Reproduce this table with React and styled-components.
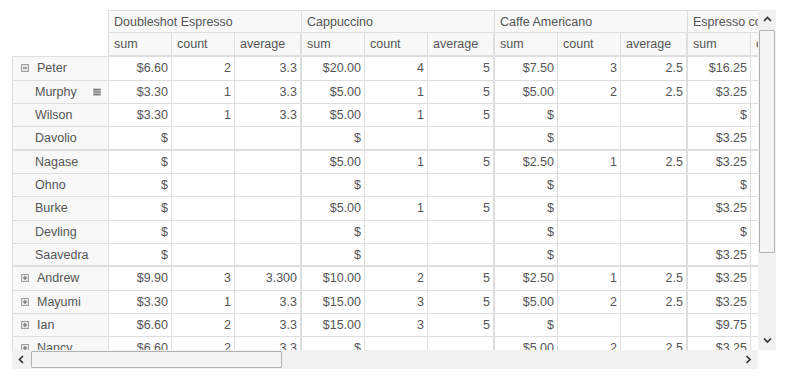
import React from "react";
import styled, { createGlobalStyle } from "styled-components";

const GlobalStyle = createGlobalStyle`
  body {
    margin: 0;
    background: #fff;
    font-family: "Liberation Sans", Arial, sans-serif;
  }
`;

const LINE = "#dedede";

const groups = ["Doubleshot Espresso", "Cappuccino", "Caffe Americano", "Espresso con Panna"];
const measures = ["sum", "count", "average"];

const E = ["$", "", ""];
const rows = [
  { name: "Peter", kind: "open", cells: [["$6.60", "2", "3.3"], ["$20.00", "4", "5"], ["$7.50", "3", "2.5"], ["$16.25", "5", "3.25"]] },
  { name: "Murphy", kind: "child", menu: true, cells: [["$3.30", "1", "3.3"], ["$5.00", "1", "5"], ["$5.00", "2", "2.5"], ["$3.25", "1", "3.25"]] },
  { name: "Wilson", kind: "child", cells: [["$3.30", "1", "3.3"], ["$5.00", "1", "5"], E, E] },
  { name: "Davolio", kind: "child", sep: true, cells: [E, E, E, ["$3.25", "1", "3.25"]] },
  { name: "Nagase", kind: "child", cells: [E, ["$5.00", "1", "5"], ["$2.50", "1", "2.5"], ["$3.25", "1", "3.25"]] },
  { name: "Ohno", kind: "child", cells: [E, E, E, E] },
  { name: "Burke", kind: "child", cells: [E, ["$5.00", "1", "5"], E, ["$3.25", "1", "3.25"]] },
  { name: "Devling", kind: "child", cells: [E, E, E, E] },
  { name: "Saavedra", kind: "child", sep: true, cells: [E, E, E, ["$3.25", "1", "3.25"]] },
  { name: "Andrew", kind: "closed", cells: [["$9.90", "3", "3.300"], ["$10.00", "2", "5"], ["$2.50", "1", "2.5"], ["$3.25", "1", "3.25"]] },
  { name: "Mayumi", kind: "closed", cells: [["$3.30", "1", "3.3"], ["$15.00", "3", "5"], ["$5.00", "2", "2.5"], ["$3.25", "1", "3.25"]] },
  { name: "Ian", kind: "closed", cells: [["$6.60", "2", "3.3"], ["$15.00", "3", "5"], E, ["$9.75", "3", "3.25"]] },
  { name: "Nancy", kind: "closed", cells: [["$6.60", "2", "3.3"], E, ["$5.00", "2", "2.5"], ["$3.25", "1", "3.25"]] },
];

const Frame = styled.div`
  margin: 10px 0 0 12px;
  display: grid;
  grid-template-columns: 746px 18px;
  grid-template-rows: 340px 19px;
  width: 764px;
`;

const Viewport = styled.div`
  overflow: hidden;
`;

const Sheet = styled.div`
  display: grid;
  width: 869px;
  grid-template-columns: 97px repeat(4, 63px 63px 67px);
  grid-template-rows: 23.33px 24px;
  grid-auto-rows: 23.33px;
  font-size: 12.5px;
  color: #555;
`;

const Corner = styled.div`
  grid-row: span 2;
  border-right: 1px solid ${LINE};
  border-bottom: 1px solid ${LINE};
`;

const GroupHead = styled.div`
  grid-column: span 3;
  box-sizing: border-box;
  background: #f8f8f8;
  border-top: 1px solid ${LINE};
  border-right: 1px solid ${LINE};
  border-bottom: 1px solid ${LINE};
  padding: 0 5px;
  display: flex;
  align-items: center;
  white-space: nowrap;
  overflow: hidden;
`;

const SubHead = styled.div`
  box-sizing: border-box;
  background: #f8f8f8;
  border-right: ${(p) => (p.$end ? 2 : 1)}px solid ${LINE};
  border-bottom: 2px solid ${LINE};
  padding: 0 5px;
  display: flex;
  align-items: center;
  white-space: nowrap;
  overflow: hidden;
`;

const RowHead = styled.div`
  box-sizing: border-box;
  background: #f8f8f8;
  border-left: 1px solid ${LINE};
  border-right: 1px solid ${LINE};
  border-bottom: ${(p) => (p.$sep ? 2 : 1)}px solid ${LINE};
  padding: 0 7px 0 ${(p) => (p.$child ? 22 : 8)}px;
  display: flex;
  align-items: center;
  white-space: nowrap;
`;

const Name = styled.span`
  flex: 1;
`;

const Cell = styled.div`
  box-sizing: border-box;
  border-right: ${(p) => (p.$end ? 2 : 1)}px solid ${LINE};
  border-bottom: ${(p) => (p.$sep ? 2 : 1)}px solid ${LINE};
  padding: 0 3px 0 4px;
  display: flex;
  align-items: center;
  justify-content: flex-end;
  white-space: nowrap;
  overflow: hidden;
`;

const VBar = styled.div`
  background: #f1f1f1;
  display: flex;
  flex-direction: column;
  align-items: center;
`;

const HBar = styled.div`
  background: #f1f1f1;
  display: flex;
  align-items: center;
`;

const Arrow = styled.div`
  flex: none;
  display: flex;
  align-items: center;
  justify-content: center;
  width: ${(p) => (p.$h ? "19px" : "18px")};
  height: ${(p) => (p.$h ? "19px" : "19px")};
`;

const Thumb = styled.div`
  box-sizing: border-box;
  background: #f4f4f4;
  border: 1px solid #b3b3b3;
  border-radius: 1px;
  width: ${(p) => (p.$h ? "251px" : "16px")};
  height: ${(p) => (p.$h ? "17px" : "223px")};
  margin: ${(p) => (p.$h ? "0 0 0 0" : "1px 0 0 0")};
`;

const Fill = styled.div`
  flex: 1;
`;

const CornerBox = styled.div`
  background: #fff;
`;

const Toggle = ({ open }) => (
  <svg width="8" height="8" viewBox="0 0 8 8" style={{ marginRight: 8, flex: "none" }}>
    <rect x="0.5" y="0.5" width="7" height="7" fill="#e4e4e4" stroke="#a0a0a0" />
    <line x1="2" y1="4" x2="6" y2="4" stroke="#666" strokeWidth="1" />
    {!open && <line x1="4" y1="2" x2="4" y2="6" stroke="#666" strokeWidth="1" />}
  </svg>
);

const MenuIcon = () => (
  <svg width="8" height="8" viewBox="0 0 8 8">
    <rect x="0" y="0" width="8" height="8" rx="1" fill="#cfcfcf" />
    <rect x="0.5" y="1" width="7" height="1.3" fill="#777" />
    <rect x="0.5" y="3.4" width="7" height="1.3" fill="#777" />
    <rect x="0.5" y="5.8" width="7" height="1.3" fill="#777" />
  </svg>
);

const Chevron = ({ dir }) => {
  const pts = {
    up: "1,5 4.5,1.5 8,5",
    down: "1,1.5 4.5,5 8,1.5",
    left: "5,1 1.5,4.5 5,8",
    right: "1.5,1 5,4.5 1.5,8",
  }[dir];
  const vertical = dir === "up" || dir === "down";
  return (
    <svg width={vertical ? 9 : 7} height={vertical ? 7 : 9} viewBox={vertical ? "0 0 9 7" : "0 0 7 9"}>
      <polyline points={pts} fill="none" stroke="#333" strokeWidth="1.7" />
    </svg>
  );
};

export default function App() {
  return (
    <>
      <GlobalStyle />
      <Frame>
        <Viewport>
          <Sheet>
            <Corner />
            {groups.map((g) => (
              <GroupHead key={g}>{g}</GroupHead>
            ))}
            {groups.map((g) =>
              measures.map((m, i) => (
                <SubHead key={g + m} $end={i === 2}>
                  {m}
                </SubHead>
              ))
            )}
            {rows.map((r) => (
              <React.Fragment key={r.name}>
                <RowHead $child={r.kind === "child"} $sep={r.sep}>
                  {r.kind !== "child" && <Toggle open={r.kind === "open"} />}
                  <Name>{r.name}</Name>
                  {r.menu && <MenuIcon />}
                </RowHead>
                {r.cells.map((grp, gi) =>
                  grp.map((v, i) => (
                    <Cell key={gi + "-" + i} $end={i === 2} $sep={r.sep}>
                      {v}
                    </Cell>
                  ))
                )}
              </React.Fragment>
            ))}
          </Sheet>
        </Viewport>
        <VBar>
          <Arrow>
            <Chevron dir="up" />
          </Arrow>
          <Thumb />
          <Fill />
          <Arrow>
            <Chevron dir="down" />
          </Arrow>
        </VBar>
        <HBar>
          <Arrow $h>
            <Chevron dir="left" />
          </Arrow>
          <Thumb $h />
          <Fill />
          <Arrow $h>
            <Chevron dir="right" />
          </Arrow>
        </HBar>
        <CornerBox />
      </Frame>
    </>
  );
}
